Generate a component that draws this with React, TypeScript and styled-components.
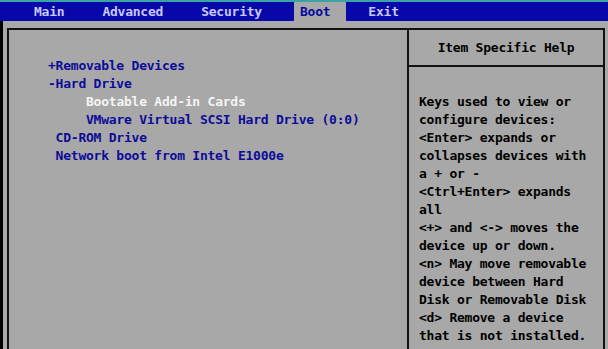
import styled, { createGlobalStyle } from "styled-components"

const GlobalStyle = createGlobalStyle`
    html, body {
        margin: 0;
        padding: 0;
        background: #a8a8a8;
    }
    body {
        font-family: "DejaVu Sans Mono", "Liberation Mono", monospace;
        font-size: 13px;
        font-weight: bold;
        letter-spacing: -0.23px;
    }
`

const CHAR = 7.6

const Screen = styled.div`
    width: 608px;
    height: 349px;
    overflow: hidden;
    display: flex;
    flex-direction: column;
    background: #a8a8a8;
    border-top: 2px solid #38a4a4;
    box-sizing: border-box;
`

const MenuBar = styled.div`
    display: flex;
    height: 19px;
    padding-left: 28px;
    gap: 16px;
    background: #0808aa;
`

const MenuItem = styled.div<{ $active?: boolean }>`
    padding: 0 16px 0 6px;
    line-height: 20px;
    white-space: pre;
    color: ${p => (p.$active ? "#0808a0" : "#c8c8ff")};
    background: ${p => (p.$active ? "#a8a8a8" : "transparent")};
`

const Body = styled.div`
    flex: 1;
    display: flex;
    border-left: 3px solid #000;
    padding: 7px 3px 0 4px;
    min-height: 0;
`

const Frame = styled.div`
    flex: 1;
    display: grid;
    grid-template-columns: 1fr 196px;
    border: 2px solid #111;
    border-bottom: none;
`

const BootList = styled.div`
    padding: 27px 0 0 39px;
`

const Entry = styled.div<{ $indent?: number; $selected?: boolean }>`
    line-height: 18px;
    white-space: pre;
    padding-left: ${p => (p.$indent ?? 0) * CHAR}px;
    color: ${p => (p.$selected ? "#f4f4f4" : "#0c0c98")};
`

const HelpPanel = styled.div`
    border-left: 2px solid #111;
    display: flex;
    flex-direction: column;
`

const HelpTitle = styled.div`
    height: 35px;
    line-height: 36px;
    text-align: center;
    color: #000;
    border-bottom: 2px solid #111;
    white-space: pre;
`

const HelpText = styled.div`
    padding: 26px 4px 0 10px;
    color: #000;
`

const HelpLine = styled.div`
    line-height: 18px;
    white-space: pre;
`

const menu = ["Main", "Advanced", "Security", "Boot", "Exit"]

const entries = [
    { text: "+Removable Devices", indent: 0 },
    { text: "-Hard Drive", indent: 0 },
    { text: "Bootable Add-in Cards", indent: 5, selected: true },
    { text: "VMware Virtual SCSI Hard Drive (0:0)", indent: 5 },
    { text: "CD-ROM Drive", indent: 1 },
    { text: "Network boot from Intel E1000e", indent: 1 },
]

const help = [
    "Keys used to view or",
    "configure devices:",
    "<Enter> expands or",
    "collapses devices with",
    "a + or -",
    "<Ctrl+Enter> expands",
    "all",
    "<+> and <-> moves the",
    "device up or down.",
    "<n> May move removable",
    "device between Hard",
    "Disk or Removable Disk",
    "<d> Remove a device",
    "that is not installed.",
]

const App = () => (
    <>
        <GlobalStyle />
        <Screen>
            <MenuBar>
                {menu.map(m => (
                    <MenuItem key={m} $active={m === "Boot"}>{m}</MenuItem>
                ))}
            </MenuBar>
            <Body>
                <Frame>
                    <BootList>
                        {entries.map(e => (
                            <Entry key={e.text} $indent={e.indent} $selected={e.selected}>
                                {e.text}
                            </Entry>
                        ))}
                    </BootList>
                    <HelpPanel>
                        <HelpTitle>Item Specific Help</HelpTitle>
                        <HelpText>
                            {help.map((l, i) => (
                                <HelpLine key={i}>{l}</HelpLine>
                            ))}
                        </HelpText>
                    </HelpPanel>
                </Frame>
            </Body>
        </Screen>
    </>
)

export default App
